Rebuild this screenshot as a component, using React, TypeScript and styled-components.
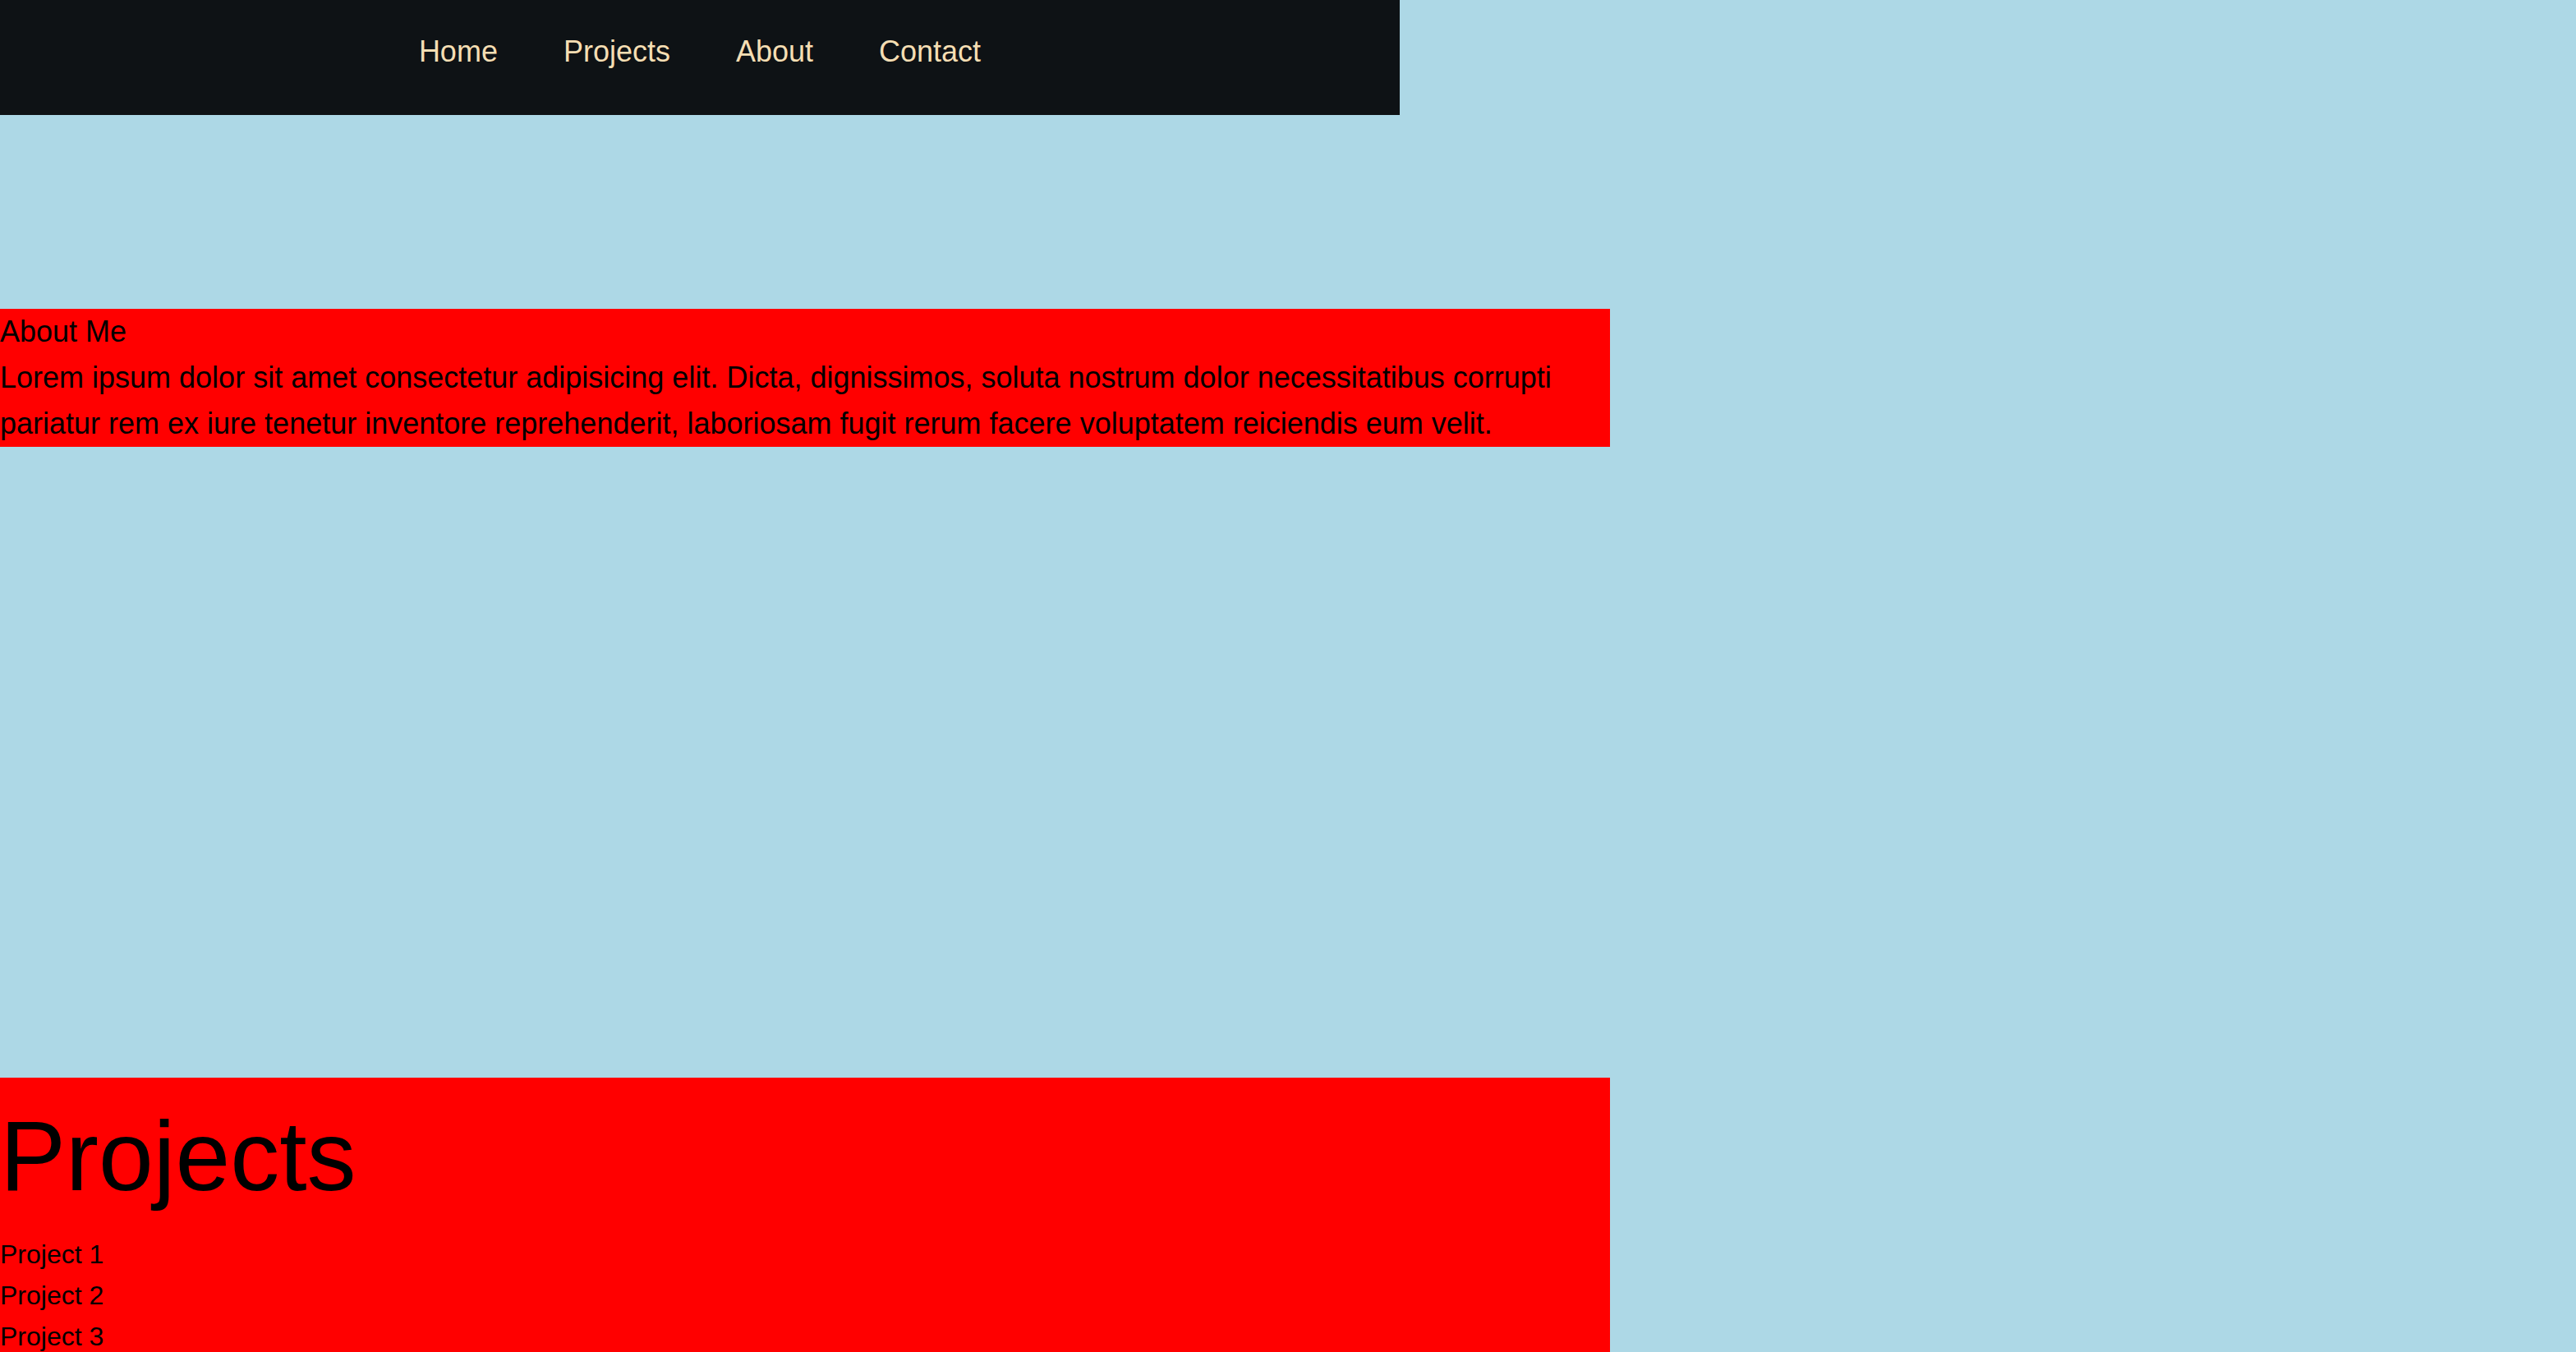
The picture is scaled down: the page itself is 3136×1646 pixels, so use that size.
import React from "react";
import styled, { createGlobalStyle } from "styled-components";

const GlobalStyle = createGlobalStyle`
  html, body {
    margin: 0;
    padding: 0;
    background: #add8e6;
    font-family: "Liberation Sans", Arial, Helvetica, sans-serif;
    color: #000;
  }
  * { box-sizing: border-box; }
`;

const NavBar = styled.nav`
  width: 1704px;
  height: 140px;
  background: #0e1215;
  display: flex;
  justify-content: center;
  align-items: flex-start;
  gap: 80px;
  padding-top: 35px;
`;

const NavLink = styled.a`
  color: #f5deb3;
  font-size: 36px;
  line-height: 56px;
  text-decoration: none;
  cursor: pointer;
`;

const Section = styled.section<{ $top: number }>`
  width: 1960px;
  background: #ff0000;
  margin-top: ${(p) => p.$top}px;
`;

const AboutTitle = styled.div`
  font-size: 36px;
  line-height: 56px;
`;

const AboutText = styled.p`
  margin: 0;
  font-size: 36px;
  line-height: 56px;
`;

const ProjectsTitle = styled.h1`
  margin: 0;
  font-weight: 400;
  font-size: 120px;
  line-height: 190px;
`;

const ProjectList = styled.ul`
  list-style: none;
  margin: 0;
  padding: 0;
`;

const ProjectItem = styled.li`
  font-size: 32px;
  line-height: 50px;
`;

export default function App() {
  return (
    <>
      <GlobalStyle />
      <NavBar>
        <NavLink>Home</NavLink>
        <NavLink>Projects</NavLink>
        <NavLink>About</NavLink>
        <NavLink>Contact</NavLink>
      </NavBar>
      <Section $top={236}>
        <AboutTitle>About Me</AboutTitle>
        <AboutText>
          Lorem ipsum dolor sit amet consectetur adipisicing elit. Dicta, dignissimos, soluta nostrum dolor
          necessitatibus corrupti pariatur rem ex iure tenetur inventore reprehenderit, laboriosam fugit rerum
          facere voluptatem reiciendis eum velit.
        </AboutText>
      </Section>
      <Section $top={768}>
        <ProjectsTitle>Projects</ProjectsTitle>
        <ProjectList>
          <ProjectItem>Project 1</ProjectItem>
          <ProjectItem>Project 2</ProjectItem>
          <ProjectItem>Project 3</ProjectItem>
        </ProjectList>
      </Section>
    </>
  );
}
